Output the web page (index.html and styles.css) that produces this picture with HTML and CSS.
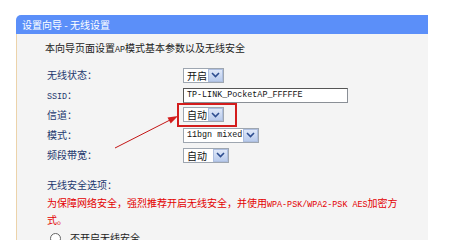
FILE: index.html
```html
<!DOCTYPE html>
<html lang="zh-CN">
<head>
  <meta charset="UTF-8">
  <title>设置向导 - 无线设置</title>
  <link rel="stylesheet" href="styles.css">
</head>
<body>
  <!-- Wizard panel -->
  <div class="panel">
    <div class="panel-title">设置向导 - 无线设置</div>

    <div class="panel-body">
      <p class="intro">本向导页面设置<span class="en">AP</span>模式基本参数以及无线安全</p>

      <div class="form">
        <div class="label">无线状态：</div>
        <div class="field">
          <span class="select w41"><span class="value">开启</span><span class="arrow"><svg width="9" height="6" viewBox="0 0 9 6"><path d="M1 1 L4.5 4.5 L8 1" /></svg></span></span>
        </div>

        <div class="label"><span class="en">SSID</span>：</div>
        <div class="field">
          <span class="input"><span class="en">TP-LINK_PocketAP_FFFFFE</span></span>
        </div>

        <div class="label">信道：</div>
        <div class="field">
          <span class="highlight">
            <span class="select w41"><span class="value">自动</span><span class="arrow"><svg width="9" height="6" viewBox="0 0 9 6"><path d="M1 1 L4.5 4.5 L8 1" /></svg></span></span>
          </span>
        </div>

        <div class="label">模式：</div>
        <div class="field">
          <span class="select w75"><span class="value en">11bgn mixed</span><span class="arrow"><svg width="9" height="6" viewBox="0 0 9 6"><path d="M1 1 L4.5 4.5 L8 1" /></svg></span></span>
        </div>

        <div class="label">频段带宽：</div>
        <div class="field">
          <span class="select w46"><span class="value">自动</span><span class="arrow"><svg width="9" height="6" viewBox="0 0 9 6"><path d="M1 1 L4.5 4.5 L8 1" /></svg></span></span>
        </div>
      </div>

      <!-- Security options -->
      <div class="security">
        <div class="label">无线安全选项：</div>
        <p class="warning">为保障网络安全，强烈推荐开启无线安全，并使用<span class="en">WPA-PSK/WPA2-PSK AES</span>加密方式。</p>
        <div class="radio"><span class="dot"></span>不开启无线安全</div>
      </div>
    </div>
  </div>

  <!-- Annotation arrow -->
  <svg class="pointer" width="469" height="240" viewBox="0 0 469 240">
    <line x1="115" y1="148" x2="170" y2="120" />
    <polygon points="178,116 167.5,117.4 170.7,123.6" />
  </svg>
</body>
</html>
```

FILE: styles.css
```css
/* Page */
body {
  margin: 0;
  height: 240px;
  overflow: hidden;
  background: #fff;
  font-family: "Noto Sans CJK SC", sans-serif;
  font-size: 10px;
  color: #222;
}

.en {
  font-family: "Liberation Mono", monospace;
  font-size: 8.4px;
  line-height: 1;
}

/* Panel */
.panel {
  margin: 15px 0 0 16px;
  width: 412px;
}

.panel-title {
  height: 19px;
  line-height: 19px;
  padding-left: 6px;
  background: #5b8ff9;
  color: #fff;
  border-radius: 5px 0 0 0;
}

.panel-body {
  height: 206px;
  padding: 7px 0 0 28px;
  background: #f4f4f4;
  border-left: 1px solid #ecd3aa;
}

.intro {
  margin: 0;
  line-height: 14px;
}

/* Form rows */
.form {
  display: grid;
  grid-template-columns: 136px 1fr;
  grid-auto-rows: 20px;
  align-items: center;
  margin: 10px 0 0 2px;
}

.label {
  color: #23386e;
  line-height: 14px;
}

.field {
  display: flex;
  align-items: center;
}

.select {
  display: inline-flex;
  align-items: stretch;
  height: 15px;
  box-sizing: border-box;
  border: 1px solid #9ea6b0;
  background: #fff;
  line-height: 13px;
  white-space: nowrap;
}

.select .value {
  flex: 1;
  padding-left: 3px;
  overflow: hidden;
  color: #111;
}

.select .value.en {
  line-height: 13px;
}

.select .arrow {
  display: flex;
  align-items: center;
  justify-content: center;
  width: 13px;
  margin: 0 0 0 1px;
  background: linear-gradient(#dfe8f8, #b9cbec);
  border: 1px solid #aebfe0;
}

.select .arrow path {
  fill: none;
  stroke: #2d4d8f;
  stroke-width: 1.6;
}

.w41 { width: 41px; }
.w46 { width: 46px; }
.w75 { width: 76px; }

.input {
  display: inline-flex;
  align-items: center;
  width: 165px;
  height: 15px;
  box-sizing: border-box;
  padding-left: 3px;
  background: #fff;
  border: 1px solid #8a8f96;
  border-top-color: #555;
  border-left-color: #555;
  color: #111;
}

.highlight {
  display: inline-flex;
  margin-left: -6px;
  padding: 2px 11px 3px 4px;
  border: 2px solid #d31c1c;
}

/* Security section */
.security {
  margin: 13px 0 0 2px;
}

.warning {
  width: 356px;
  margin: 2px 0 0;
  line-height: 17px;
  color: #e30000;
}

.radio {
  display: flex;
  align-items: center;
  margin-top: 3px;
  line-height: 14px;
  color: #222;
}

.dot {
  width: 9px;
  height: 9px;
  margin: 0 9px 0 3px;
  border: 1px solid #666;
  border-radius: 50%;
  background: #fff;
}

/* Annotation arrow */
.pointer {
  position: absolute;
  left: 0;
  top: 0;
  pointer-events: none;
}

.pointer line {
  stroke: #c41616;
  stroke-width: 1;
}

.pointer polygon {
  fill: #d31c1c;
}
```
